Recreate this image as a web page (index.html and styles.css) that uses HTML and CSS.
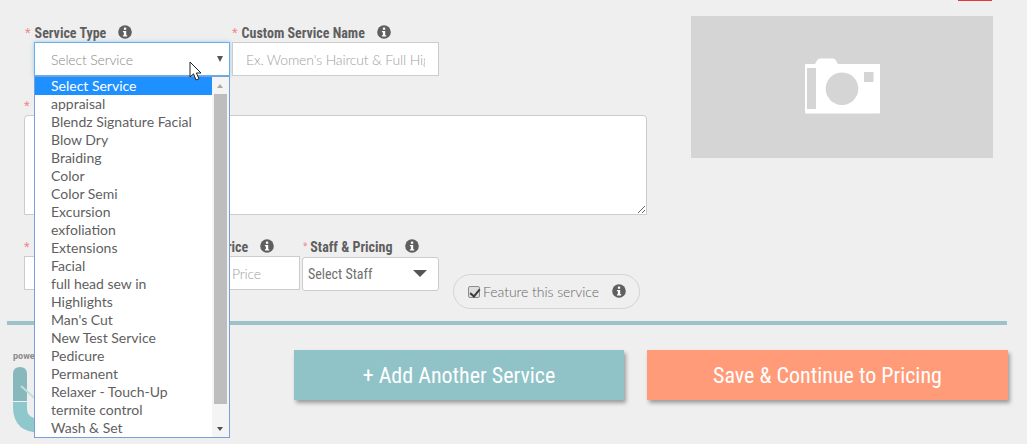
FILE: index.html
```html
<!DOCTYPE html>
<html lang="en">
<head>
<meta charset="utf-8">
<title>Add Service</title>
<link rel="stylesheet" href="styles.css">
</head>
<body>
<div class="page">
  <div class="redbar"></div>
  <div class="top">
    <form class="form">
      <div class="row row-one">
        <div class="field f-type">
          <div class="label"><span class="req">*</span> Service Type <svg class="info" viewBox="0 0 14 14"><use href="#i"/></svg></div>
          <div class="select-box"><span>Select Service</span><i class="tri"></i></div>
        </div>
        <div class="field f-name">
          <div class="label"><span class="req">*</span> Custom Service Name <svg class="info" viewBox="0 0 14 14"><use href="#i"/></svg></div>
          <input class="input" type="text" placeholder="Ex. Women's Haircut &amp; Full Highlights">
        </div>
      </div>
      <div class="field f-desc">
        <div class="label"><span class="req">*</span></div>
        <textarea class="area"></textarea>
      </div>
      <div class="row row-three">
        <div class="field f-dur">
          <div class="label"><span class="req">*</span></div>
          <input class="input" type="text">
        </div>
        <div class="field f-price">
          <div class="label lab-price">Price <svg class="info" viewBox="0 0 14 14"><use href="#i"/></svg></div>
          <input class="input" type="text" placeholder="Price">
        </div>
        <div class="field f-staff">
          <div class="label"><span class="req small">*</span> Staff &amp; Pricing <svg class="info" viewBox="0 0 14 14"><use href="#i"/></svg></div>
          <div class="staff"><span>Select Staff</span><i class="tri-big"></i></div>
        </div>
        <label class="feature"><input type="checkbox" checked><span>Feature this service</span><svg class="info" viewBox="0 0 14 14"><use href="#i"/></svg></label>
      </div>
    </form>
    <div class="photo">
      <svg class="cam" viewBox="0 0 75 56"><path fill-rule="evenodd" fill="#fff" d="M1 6h9l2-3.500q1-2 3-2h13q2 0 3 2L33 6h41q1 0 1 1v47.500q0 1-1 1H1q-1 0-1-1V7q0-1 1-1zM2 10v41h9V10zM37 14.400a16.300 16.300 0 1 0 .01 0zM59 14v10h9.500V14z"/></svg>
    </div>
  </div>
  <div class="rule"></div>
  <div class="bottom">
    <div class="logo">
      <div class="powered">powe</div>
      <svg class="mark" viewBox="0 0 58 66"><circle cx="27" cy="13" r="6" fill="#acd6db"/><path fill="#8fc8cc" d="M0 35h14v7q0 10 15 10v14Q0 66 0 40z"/><path fill="#86b8bc" d="M0 7q0-7 7-7t7 7v27H0z"/><path d="M8 19l18 16" stroke="#bfe0e3" stroke-width="2"/></svg>
    </div>
    <div class="actions">
      <button class="btn teal" type="button">+ Add Another Service</button>
      <button class="btn orange" type="button">Save &amp; Continue to Pricing</button>
    </div>
  </div>

  <div class="drop">
    <ul class="opts">
      <li class="on">Select Service</li><li>appraisal</li><li>Blendz Signature Facial</li><li>Blow Dry</li><li>Braiding</li><li>Color</li><li>Color Semi</li><li>Excursion</li><li>exfoliation</li><li>Extensions</li><li>Facial</li><li>full head sew in</li><li>Highlights</li><li>Man's Cut</li><li>New Test Service</li><li>Pedicure</li><li>Permanent</li><li>Relaxer - Touch-Up</li><li>termite control</li><li>Wash &amp; Set</li>
    </ul>
    <div class="sbar"><i class="up"></i><b class="thumb"></b><i class="down"></i></div>
  </div>
  <svg class="cursor" viewBox="0 0 14 21"><path d="M1 1v15l3.500-3.200L7 19l3-1.300-2.600-5.700H12z" fill="#fff" stroke="#222" stroke-width="1"/></svg>
</div>
<svg class="defs" width="0" height="0"><defs><g id="i"><circle cx="7" cy="7" r="6.800" fill="#5f5f5f"/><rect x="5.900" y="2.600" width="2.300" height="2.200" fill="#fff"/><path d="M4.900 6h3.300v4.200h1v1.300H4.900v-1.300h1V7.300h-1z" fill="#fff"/></g></defs></svg>
</body>
</html>
```
FILE: styles.css
```css
* { box-sizing: border-box; }
html, body { margin: 0; padding: 0; }
body { background: #efefef; font-family: Lato, "Liberation Sans", sans-serif; color: #5f5f5f; }
.page { position: relative; width: 1027px; height: 444px; overflow: hidden; }
.defs { position: absolute; }
.redbar { position: absolute; left: 958px; top: 0; width: 34px; height: 1px; background: #e53935; }

.top { display: flex; height: 321px; padding: 16px 34px 0 24px; }
.form { width: 667px; display: flex; flex-direction: column; }
.row { display: flex; }
.row-one { gap: 3px; margin-top: 8px; }
.field { display: flex; flex-direction: column; }
.label { font-family: "Roboto Condensed", "Liberation Sans Narrow", Roboto, sans-serif; font-weight: 700; font-size: 14px; line-height: 18px; height: 18px; color: #5f5f5f; white-space: nowrap; display: flex; align-items: center; }
.req { color: #f08a8a; font-weight: 400; margin-right: 4px; font-size: 13px; }
.req.small { font-size: 10px; margin-left: 1px; margin-right: 3px; }
.info { width: 14px; height: 14px; margin-left: 12px; margin-top: -3px; flex: none; }
.f-type { width: 205px; padding-left: 1px; }
.f-type .select-box { margin-left: 9px; }
.select-box { height: 34px; width: 196px; background: #fff; border: 1px solid #6aaee8; box-shadow: 0 0 4px rgba(102,175,233,.6); display: flex; align-items: center; justify-content: space-between; padding: 0 6px 0 16px; font-size: 14px; letter-spacing: -.15px; color: #8a8a8a; font-weight: 300; }
.tri { width: 0; height: 0; border-left: 3.500px solid transparent; border-right: 3.500px solid transparent; border-top: 6px solid #555; }
.f-name { width: 207px; }
.input { height: 34px; background: #fff; border: 1px solid #ccc; padding: 0 13px; font-family: Lato, sans-serif; font-size: 14px; letter-spacing: -.15px; font-weight: 300; color: #555; outline: 0; width: 100%; border-radius: 0; }
.input::placeholder { color: #a0a0a0; opacity: 1; }
.f-desc { margin-top: 21px; }
.area { display: block; width: 623px; height: 100px; background: #fff; border: 1px solid #ccc; border-radius: 4px 4px 0 0; }
.row-three { margin-top: 23px; align-items: flex-start; width: 640px; }
.f-dur { width: 188px; }
.f-price { width: 88px; }
.lab-price { padding-left: 7px; }
.f-price .input { padding-left: 19px; }
.f-staff { width: 137px; margin-left: 2px; }
.staff { height: 34px; margin-top: 1px; background: #fff; border: 1px solid #ccc; border-radius: 3px; display: flex; align-items: center; justify-content: space-between; padding: 0 11px 0 5px; font-family: "Roboto Condensed", "Liberation Sans Narrow", Roboto, sans-serif; font-size: 14px; color: #707070; }
.tri-big { width: 0; height: 0; border-left: 7px solid transparent; border-right: 7px solid transparent; border-top: 7px solid #555; margin-top: -2px; }
.feature { display: flex; align-items: center; height: 35px; width: 187px; margin: 36px 0 0 14px; padding: 0 14px; border: 1px solid #d4d4d4; border-radius: 18px; font-size: 14px; letter-spacing: -.05px; font-weight: 300; color: #666; }
.feature input { appearance: none; position: relative; margin: 0 3px 0 0; width: 12px; height: 12px; background: #dedede; border: 1px solid #8c8c8c; border-radius: 2px; flex: none; }
.feature input::after { content: ""; position: absolute; left: 3px; top: 0; width: 4px; height: 8px; border: solid #3c3c3c; border-width: 0 2px 2px 0; transform: rotate(40deg); }
.feature span { white-space: nowrap; }
.feature .info { margin-left: 13px; margin-top: -2px; }

.photo { width: 302px; height: 142px; background: #d5d5d5; display: flex; align-items: center; justify-content: center; }
.cam { width: 75px; height: 56px; margin: 0 0 2px 1px; }

.rule { height: 4px; margin: 0 20px 0 7px; background: #9cc3c8; }

.bottom { display: flex; padding: 25px 19px 0 13px; justify-content: space-between; }
.logo { width: 21px; }
.powered { font-family: "Liberation Sans Narrow", Roboto, sans-serif; font-weight: 700; font-size: 9px; color: #8a8a8a; line-height: 12px; white-space: nowrap; }
.mark { display: block; width: 58px; height: 66px; margin-top: 5px; }
.actions { display: flex; gap: 23px; }
.btn { height: 50px; border: 0; color: #fff; font-family: "Roboto Condensed", "Liberation Sans Narrow", Roboto, sans-serif; font-size: 22px; font-weight: 400; box-shadow: 2px 3px 4px rgba(0,0,0,.35); padding: 0; }
.teal { width: 330px; background: #8fc3c8; }
.orange { width: 361px; background: #ff9b78; }

.drop { position: absolute; left: 34px; top: 76px; width: 196px; height: 362px; background: #fff; border: 1px solid #7b9ed6; display: flex; }
.opts { list-style: none; margin: 0; padding: 0; width: 178px; font-size: 14px; line-height: 18px; color: #5f5f5f; }
.opts li { height: 18px; padding-left: 16px; white-space: nowrap; }
.opts .on { background: #1e90ff; color: #fff; }
.sbar { width: 17px; position: relative; background: #f4f4f4; }
.thumb { position: absolute; left: 2px; top: 17px; width: 13px; height: 310px; background: #bdbdbd; }
.up, .down { position: absolute; left: 5px; width: 0; height: 0; border-left: 3.500px solid transparent; border-right: 3.500px solid transparent; }
.up { top: 7px; border-bottom: 4px solid #a8a8a8; }
.down { bottom: 6px; border-top: 4px solid #505050; }
.cursor { position: absolute; left: 189px; top: 61px; width: 14px; height: 21px; }
```
